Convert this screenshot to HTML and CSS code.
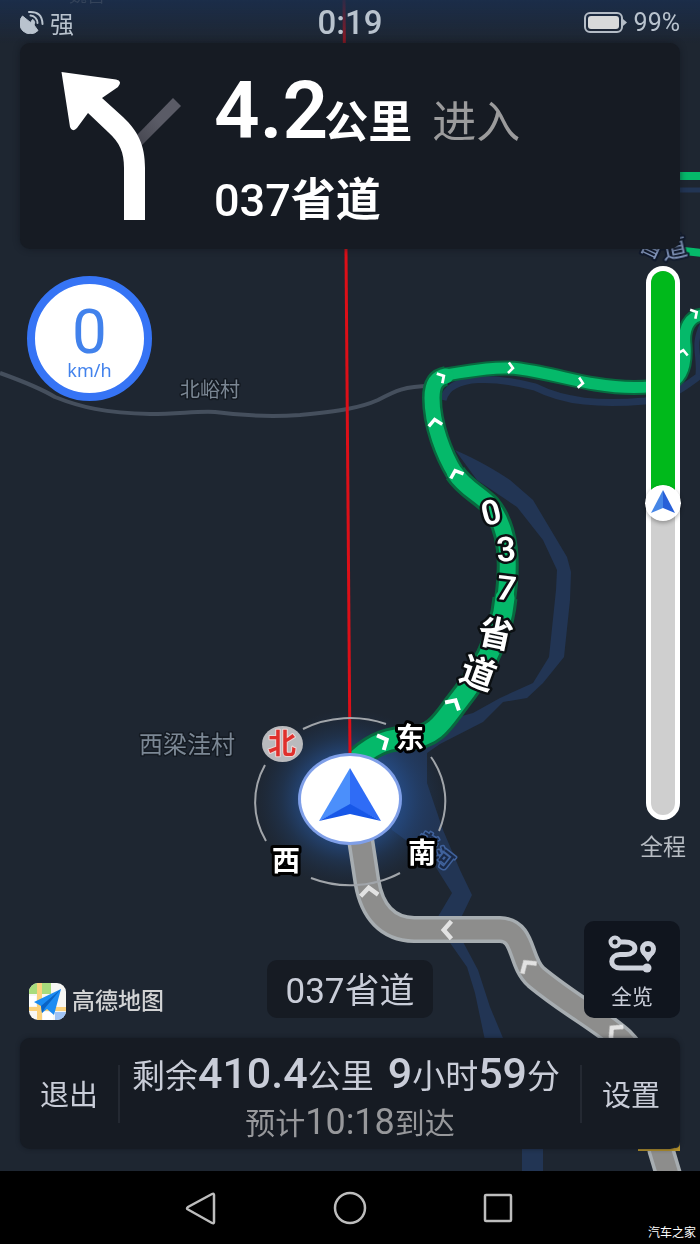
FILE: index.html
```html
<!DOCTYPE html>
<html lang="zh-CN">
<head>
<meta charset="utf-8">
<meta name="viewport" content="width=device-width, initial-scale=1">
<title>导航</title>
<link rel="stylesheet" href="styles.css">
</head>
<body>
<div class="screen">
  <main class="nav">
    <svg class="map" viewBox="0 0 700 1171" preserveAspectRatio="xMidYMin slice" aria-hidden="true">
      <defs>
        <radialGradient id="glow">
          <stop offset="0.5" stop-color="#2858a0" stop-opacity="0.6"/>
          <stop offset="0.7" stop-color="#24508f" stop-opacity="0.28"/>
          <stop offset="1" stop-color="#1f3658" stop-opacity="0"/>
        </radialGradient>
        <path id="chev" d="M-8 4 L0 -3 L8 4" fill="none" stroke="#fff" stroke-width="4"/>
        <path id="r1" d="M432 398 C431 384 434 377 446 375 C475 370 500 366 520 369 C548 373 575 381 595 384 C625 389 650 388 668 384 C684 379 686 360 685 345 C683 328 690 316 702 315"/>
        <path id="r2" d="M455 473 C444 455 432 425 432 398 C432 386 435 378 446 376"/>
        <path id="r3" d="M505 600 C510 565 510 530 490 505 C478 493 465 488 455 473"/>
        <path id="r4" d="M358 758 C375 743 390 738 410 738 C434 738 444 720 456 704 C480 674 501 640 505 598"/>
        <path id="passed" d="M360 836 L367 882 C372 912 388 929 414 929.500 L500 929.500 C525 930 519 962 536 977 C570 1005 600 1020 622 1040 C648 1066 655 1110 661 1150 L670 1180"/>
      </defs>

      <g fill="#223554">
        <path d="M455 450 C478 460 495 470 510 480 L533 500 L567 557 L571 572 L570 600 L564 657 L543 683 L527 698 L503 702 L483 722 L440 744 L427 753 L427 783 L443 830 L460 870 L472 895 L460 920 L436 920 L452 893 L430 858 L392 830 L370 760 L447 720 L473 713 L500 698 L533 683 L549 657 L556 590 L557 570 L543 540 L517 507 L477 480 Z"/>
        <path d="M448 940 L462 940 L478 970 L490 1007 L508 1050 L487 1050 L475 993 L467 967 Z"/>
        <path d="M522 1140 H543 V1171 H522 Z"/>
      </g>
      <g fill="none" stroke="#223554">
        <path d="M443 400 C450 372 500 378 535 387 C565 402 600 405 645 401 C675 397 686 385 702 374" stroke-width="7"/>
        <path d="M702 325 C692 345 700 355 698 375 M670 190 H702" stroke-width="5"/>
      </g>
      <path d="M0 373 C25 382 40 388 55 397 C80 407 105 413 150 414 C180 414 195 411 215 412 C245 416 270 417 300 415 C340 411 360 408 378 400 C395 391 405 386 430 386" fill="none" stroke="#454f5d" stroke-width="4"/>

      <ellipse cx="350" cy="799" rx="98" ry="90" fill="url(#glow)"/>

      <g fill="none" stroke="#08693f">
        <use href="#r1" stroke-width="15"/>
        <use href="#r2" stroke-width="20"/>
        <use href="#r3" stroke-width="22"/>
        <use href="#r4" stroke-width="25"/>
      </g>
      <g fill="none" stroke="#05b96a" stroke-linecap="round">
        <use href="#r1" stroke-width="11"/>
        <use href="#r2" stroke-width="15"/>
        <use href="#r3" stroke-width="16"/>
        <use href="#r4" stroke-width="19"/>
        <path d="M675 176 H702 M675 250 L702 253" stroke-width="8"/>
      </g>
      <use href="#passed" fill="none" stroke="#a7adb1" stroke-width="27"/>
      <use href="#passed" fill="none" stroke="#8d8d8c" stroke-width="20"/>

      <g>
        <use href="#chev" transform="translate(384 741) rotate(65)"/>
        <use href="#chev" transform="translate(454 703) rotate(30)"/>
        <use href="#chev" transform="translate(456 473) rotate(-20) scale(.85)"/>
        <use href="#chev" transform="translate(435 422) rotate(-8) scale(.85)"/>
        <use href="#chev" transform="translate(442 377) rotate(60) scale(.7)"/>
        <use href="#chev" transform="translate(511 368) rotate(95) scale(.65)"/>
        <use href="#chev" transform="translate(581 383) rotate(98) scale(.65)"/>
        <use href="#chev" transform="translate(683 352) rotate(10) scale(.65)"/>
        <use href="#chev" transform="translate(695 313) rotate(60) scale(.65)"/>
      </g>
      <g opacity="0.75">
        <use href="#chev" transform="translate(369 891) rotate(-5) scale(1.100)"/>
        <use href="#chev" transform="translate(447 930) rotate(-90) scale(1.100)"/>
        <use href="#chev" transform="translate(527 965) rotate(-35) scale(1.100)"/>
        <use href="#chev" transform="translate(614 1030) rotate(-45) scale(1.100)"/>
      </g>
      <path d="M638 1148 H675 Q680 1148 680 1142 V1151 H638 Z" fill="#b5922c"/>

      <path d="M344 0 L350 756" stroke="#dc0f18" stroke-width="3"/>

      <text class="place small" x="210" y="397">北峪村</text>
      <text class="place" x="187" y="753">西梁洼村</text>
      <text class="water" transform="translate(648 254) rotate(25)">省</text>
      <text class="water" transform="translate(676 257) rotate(-12)">道</text>
      <text class="river" transform="translate(424 848) rotate(32)">老</text>
      <text class="river" transform="translate(439 864) rotate(38)">河</text>

      <g class="road">
        <text transform="translate(494 524) rotate(-14)">0</text>
        <text transform="translate(507 561) rotate(-4)">3</text>
        <text transform="translate(505 600) rotate(7)">7</text>
        <text class="cjk" transform="translate(493 646) rotate(12)">省</text>
        <text class="cjk" transform="translate(474 685) rotate(20)">道</text>
      </g>

      <g fill="none" stroke="#a1a5aa" stroke-width="2">
        <path d="M303 729 A96 84 0 0 1 386 724"/>
        <path d="M431 757 A96 84 0 0 1 439 831"/>
        <path d="M400 873 A96 84 0 0 1 311 878"/>
        <path d="M266 841 A96 84 0 0 1 265 765"/>
      </g>
      <ellipse cx="350" cy="799" rx="52" ry="46" fill="#7f9fe8"/>
      <ellipse cx="350" cy="799" rx="49" ry="43" fill="#fff"/>
      <path d="M350 768 L319 821 L350 805 Z" fill="#4b8ffb"/>
      <path d="M350 768 L381 821 L350 805 Z" fill="#2f6cf6"/>
      <path d="M319 821 L350 804 L381 821 L350 814 Z" fill="#1757e8"/>
      <ellipse cx="282.500" cy="744" rx="20.500" ry="18" fill="#b9babd"/>
      <text class="north" x="282" y="754">北</text>
      <g class="compass">
        <text x="410" y="748">东</text>
        <text x="422" y="863">南</text>
        <text x="286" y="871">西</text>
      </g>
    </svg>

    <header class="status">
      <span class="gps">
        <svg width="24" height="24" viewBox="0 0 24 24" aria-hidden="true">
          <path d="M2.500 6 L10.500 12.500 L12.500 9.500 Q16 11 14 15 L18 20.500 A9.500 9.500 0 0 1 2.500 6 Z" fill="#b9c3ce" stroke="#b9c3ce" stroke-linejoin="round"/>
          <path d="M10.500 5.500 A7.500 7.500 0 0 1 17.500 13 M9 2 Q22 1 22.500 14" fill="none" stroke="#b9c3ce" stroke-width="2" stroke-linecap="round"/>
        </svg>
        <span>强</span>
      </span>
      <time class="clock">0:19</time>
      <span class="battery">
        <svg width="44" height="21" viewBox="0 0 44 21" aria-hidden="true">
          <rect x="1" y="1" width="37" height="19" rx="5" fill="none" stroke="#b4bcc6" stroke-width="2"/>
          <rect x="4" y="4" width="31" height="13" rx="3" fill="#d8d9da"/>
          <path d="M39 7 L43 10.500 L39 14 Z" fill="#b4bcc6"/>
        </svg>
        <span>99%</span>
      </span>
      <span class="clipped">魏营</span>
    </header>

    <section class="turn">
      <svg class="turn-icon" width="121" height="150" viewBox="61 71 121 150" aria-hidden="true">
        <defs>
          <linearGradient id="branch" x1="0" y1="1" x2="1" y2="0">
            <stop offset="0" stop-color="#44454f"/><stop offset="0.5" stop-color="#5a5b66"/>
          </linearGradient>
        </defs>
        <path d="M137 135 L173 98 L181 106 L141 146 Z" fill="url(#branch)"/>
        <path d="M61.500 72 L116 79.500 Q123 81 118 87 L102 98 L123 117 C138 131 145 145 145 168 V220 H124 V168 C124 152 120 143 108 132 L88 113 L77 128 Q72 133 70 127 Z" fill="#fff"/>
      </svg>
      <div class="turn-text">
        <p class="distance"><b>4.2</b><span>公里</span><em>进入</em></p>
        <h1 class="next-road">037<b>省道</b></h1>
      </div>
    </section>

    <div class="middle">
      <div class="speed"><b>0</b><span>km/h</span></div>
      <div class="trip">
        <div class="track" role="progressbar" aria-label="全程" aria-valuenow="41">
          <div class="ahead"></div>
          <svg class="pin" width="36" height="36" viewBox="0 0 36 36" aria-hidden="true">
            <circle cx="18" cy="18" r="18" fill="#fff"/>
            <path d="M18 5 L6 28 L18 23 Z" fill="#4686e6"/>
            <path d="M18 5 L30 28 L18 23 Z" fill="#2860d8"/>
          </svg>
        </div>
        <span class="trip-label">全程</span>
      </div>
    </div>

    <div class="lower">
      <div class="brand">
        <svg width="37" height="37" viewBox="0 0 37 37" aria-hidden="true">
          <defs><clipPath id="tile"><rect width="37" height="37" rx="9"/></clipPath></defs>
          <g clip-path="url(#tile)">
            <rect width="37" height="37" fill="#f7f7f4"/>
            <path d="M0 0 H22 V11 H0 Z" fill="#a8dc7c"/>
            <path d="M8 0 H13 V37 H8 Z M0 24 H37 V28 H0 Z" fill="#fbd27c"/>
            <path d="M0 13 H7 V23 H0 Z M14 29 H24 V37 H14 Z" fill="#fff"/>
            <path d="M26 29 H37 V37 H26 Z" fill="#9fc3f5"/>
          </g>
          <path d="M32 6 L5 19 L12 23 L13 30 L18 26 L25 32 Z" fill="#1b8cf3"/>
          <path d="M32 6 L12 23 L13 30 L16 25 Z" fill="#0a63c4"/>
        </svg>
        <span>高德地图</span>
      </div>
      <div class="current-road">037省道</div>
      <button class="overview" type="button">
        <svg width="48" height="38" viewBox="0 0 48 38" aria-hidden="true">
          <g fill="none" stroke="#ced2dc" stroke-width="4">
            <circle cx="7" cy="7" r="4.500"/>
            <path d="M12 7 H17 C30 7 30 19 18 19.500 H12 C1 20 1 33 12 33 H38" stroke-width="5"/>
            <circle cx="40" cy="14" r="5.500" stroke-width="5"/>
          </g>
          <path d="M33.500 18 L40 27 L46.500 18 L40 20 Z" fill="#ced2dc"/>
          <circle cx="39" cy="33" r="4.500" fill="#ced2dc"/>
        </svg>
        <span>全览</span>
      </button>
    </div>

    <section class="summary">
      <button class="side" type="button">退出</button>
      <div class="info">
        <p class="remain">剩余<b>410.4</b>公里<b class="hours">9</b>小时<b>59</b>分</p>
        <p class="eta">预计<b>10:18</b>到达</p>
      </div>
      <button class="side" type="button">设置</button>
    </section>
  </main>

  <footer class="system">
    <button type="button" aria-label="返回">
      <svg width="36" height="36" viewBox="0 0 36 36"><path d="M28 4 Q30 3 30 5 V32 Q30 34 28 33 L4 19.500 Q2 18.500 4 17 Z" fill="none" stroke="#bdbdbd" stroke-width="2.500"/></svg>
    </button>
    <button type="button" aria-label="主屏幕">
      <svg width="36" height="36" viewBox="0 0 36 36"><circle cx="18" cy="18" r="15" fill="none" stroke="#bdbdbd" stroke-width="2.500"/></svg>
    </button>
    <button type="button" aria-label="最近任务">
      <svg width="36" height="36" viewBox="0 0 36 36"><rect x="5" y="5" width="26" height="26" rx="1" fill="none" stroke="#bdbdbd" stroke-width="2.500"/></svg>
    </button>
    <span class="credit">汽车之家</span>
  </footer>
</div>
</body>
</html>
```
FILE: styles.css
```css
* {
  box-sizing: border-box;
}

body {
  margin: 0;
  background: #000;
  font-family: Roboto, "Noto Sans CJK SC", sans-serif;
  color: #c9cdd8;
}

p,
h1 {
  margin: 0;
  font-weight: 400;
}

b {
  font-weight: 500;
}

button {
  margin: 0;
  padding: 0;
  border: 0;
  background: none;
  font: inherit;
  color: inherit;
}

svg {
  display: block;
  flex: none;
}

.screen {
  display: flex;
  flex-direction: column;
  min-height: 100vh;
}

.nav {
  position: relative;
  flex: 1;
  display: flex;
  flex-direction: column;
  padding: 0 20px 22px;
  background: #1e2631;
  overflow: hidden;
}

.map {
  position: absolute;
  inset: 0;
  width: 100%;
  height: 100%;
}

.map text {
  text-anchor: middle;
  paint-order: stroke;
  stroke-linejoin: round;
}

.place {
  font-size: 24px;
  fill: #7b8794;
  stroke: #141a22;
  stroke-width: 3px;
}

.place.small {
  font-size: 20px;
}

.water {
  font-size: 26px;
  fill: #8093b8;
  stroke: #111a2c;
  stroke-width: 4px;
}

.river {
  font-size: 20px;
  font-weight: 700;
  fill: #1a2a48;
  stroke: #40629c;
  stroke-width: 3px;
}

.road text {
  font-size: 34px;
  font-weight: 600;
  fill: #fff;
  stroke: #0b0f12;
  stroke-width: 5px;
}

.road .cjk {
  font-size: 35px;
  font-weight: 700;
}

.north {
  font-size: 28px;
  font-weight: 700;
  fill: #e0302c;
  stroke: #ecd6d6;
  stroke-width: 2px;
}

.compass {
  font-size: 28px;
  font-weight: 700;
  fill: #fff;
  stroke: #000;
  stroke-width: 6px;
}

.status,
.turn,
.middle,
.lower,
.summary {
  position: relative;
}

.status {
  display: grid;
  grid-template-columns: 1fr auto 1fr;
  align-items: center;
  height: 43px;
  margin: 0 -20px;
  padding: 1px 20px 0;
  background: linear-gradient(rgba(27, 46, 76, 0.9), rgba(30, 38, 49, 0.4));
  font-size: 24px;
  color: #b9c3ce;
}

.gps,
.battery {
  display: flex;
  align-items: center;
  gap: 6px;
}

.battery {
  justify-content: flex-end;
  font-size: 25px;
}

.clock {
  font-size: 33px;
  font-weight: 500;
}

.clipped {
  position: absolute;
  left: 69px;
  top: -14px;
  font-size: 18px;
  line-height: 20px;
  color: #34435a;
}

.turn {
  display: flex;
  gap: 32px;
  height: 206px;
  padding: 28px 20px 0 41px;
  border-radius: 10px;
  background: #161b23;
  box-shadow: 0 0 6px rgba(15, 20, 28, 0.6);
  color: #fff;
}

.distance {
  display: flex;
  align-items: baseline;
  height: 96px;
  font-size: 44px;
  line-height: 80px;
  font-weight: 700;
}

.distance b {
  font-size: 80px;
  font-weight: 600;
}

.distance span {
  margin-left: -4px;
}

.distance em {
  margin-left: 20px;
  font-style: normal;
  font-weight: 400;
  color: #9b9b9c;
}

.next-road {
  font-size: 45px;
  line-height: 68px;
  font-weight: 500;
}

.next-road b {
  font-weight: 700;
}

.middle {
  flex: 1;
  display: flex;
  justify-content: space-between;
  align-items: stretch;
}

.speed {
  display: flex;
  flex-direction: column;
  align-items: center;
  width: 125px;
  height: 125px;
  margin: 27px 0 0 7px;
  padding-top: 12px;
  border: 8px solid #3674f5;
  border-radius: 50%;
  background: #fff;
  color: #4282ec;
}

.speed b {
  font-size: 62px;
  line-height: 72px;
  font-weight: 400;
}

.speed span {
  margin-top: -8px;
  font-family: "Noto Sans", sans-serif;
  font-size: 18px;
  line-height: 20px;
}

.trip {
  display: flex;
  flex-direction: column;
  align-items: center;
  width: 34px;
  padding: 17px 0 57px;
}

.track {
  display: flex;
  flex-direction: column;
  align-items: center;
  flex: 1;
  width: 34px;
  border: 5px solid #fff;
  border-radius: 17px;
  background: #cfcfcf;
}

.ahead {
  flex: none;
  width: 24px;
  height: 41%;
  border-radius: 12px 12px 0 0;
  background: #00b91b;
}

.pin {
  margin-top: -9px;
  border-radius: 50%;
  box-shadow: 0 2px 4px rgba(0, 0, 0, 0.3);
}

.trip-label {
  margin-top: 12px;
  font-size: 23px;
  line-height: 32px;
  white-space: nowrap;
  color: #b8bdc4;
}

.lower {
  display: grid;
  grid-template-columns: 1fr auto 1fr;
  align-items: end;
  margin-bottom: 20px;
}

.brand {
  display: flex;
  align-items: center;
  gap: 6px;
  margin-left: 9px;
  margin-bottom: -2px;
  font-size: 23px;
  line-height: 36px;
  font-weight: 500;
  color: #d2d3d4;
}

.current-road {
  height: 58px;
  padding: 0 18px;
  border-radius: 10px;
  background: #161b23;
  font-size: 35px;
  line-height: 64px;
}

.overview {
  display: flex;
  flex-direction: column;
  align-items: center;
  justify-self: end;
  gap: 8px;
  width: 96px;
  height: 97px;
  padding-top: 14px;
  border-radius: 10px;
  background: #10151e;
  font-size: 21px;
  line-height: 32px;
}

.summary {
  display: grid;
  grid-template-columns: 98px 1fr 98px;
  align-items: center;
  height: 111px;
  border-radius: 10px;
  background: #161b23;
  box-shadow: 0 0 4px rgba(15, 20, 28, 0.6);
}

.side {
  height: 58px;
  padding-bottom: 2px;
  font-size: 29px;
}

.info {
  height: 58px;
  display: flex;
  flex-direction: column;
  align-items: center;
  justify-content: center;
  padding-top: 6px;
  border: solid #242932;
  border-width: 0 2px;
  white-space: nowrap;
}

.remain {
  padding-right: 8px;
  font-size: 33px;
  line-height: 48px;
}

.remain b {
  font-size: 43px;
}

.remain .hours {
  margin-left: 14px;
}

.eta {
  font-size: 30px;
  line-height: 42px;
  color: #97989b;
}

.eta b {
  font-size: 36px;
  font-weight: 400;
}

.system {
  position: relative;
  display: flex;
  align-items: center;
  justify-content: center;
  gap: 112px;
  height: 73px;
  background: #000;
}

.credit {
  position: absolute;
  right: 4px;
  bottom: 2px;
  font-size: 12px;
  line-height: 18px;
  color: #fff;
}
```
